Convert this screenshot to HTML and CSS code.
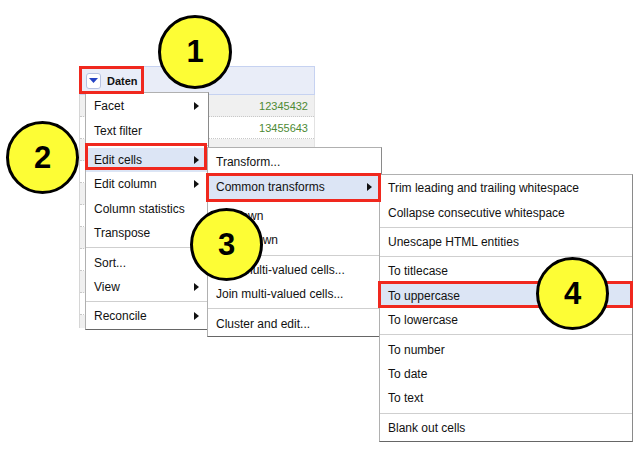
FILE: index.html
```html
<!DOCTYPE html>
<html lang="de">
<head>
<meta charset="utf-8">
<title>OpenRefine – Common transforms</title>
<link rel="stylesheet" href="styles.css">
</head>
<body>
<div class="stage">
  <div class="grid">
    <div class="head">
      <span class="dd"><svg width="9" height="5" viewBox="0 0 9 5"><path d="M0 0H9L4.5 5Z" fill="#2544c4"/></svg></span>
      <span class="colname">Daten</span>
    </div>
    <div class="rows">
      <div class="row odd"><span>12345432</span></div>
      <div class="row"><span>13455643</span></div>
      <div class="row odd"></div>
      <div class="row"></div>
      <div class="row odd"></div>
      <div class="row"></div>
      <div class="row odd"></div>
      <div class="row"></div>
      <div class="row odd"></div>
      <div class="row"></div>
      <div class="row odd"></div>
    </div>
  </div>

  <div class="menu m1">
    <div class="item"><span>Facet</span><svg class="arr" width="5" height="8" viewBox="0 0 5 8"><path d="M0 0L5 4L0 8Z"/></svg></div>
    <div class="item"><span>Text filter</span></div>
    <div class="sep"></div>
    <div class="item on"><span>Edit cells</span><svg class="arr" width="5" height="8" viewBox="0 0 5 8"><path d="M0 0L5 4L0 8Z"/></svg></div>
    <div class="item"><span>Edit column</span><svg class="arr" width="5" height="8" viewBox="0 0 5 8"><path d="M0 0L5 4L0 8Z"/></svg></div>
    <div class="item"><span>Column statistics</span></div>
    <div class="item"><span>Transpose</span></div>
    <div class="sep"></div>
    <div class="item"><span>Sort...</span></div>
    <div class="item"><span>View</span><svg class="arr" width="5" height="8" viewBox="0 0 5 8"><path d="M0 0L5 4L0 8Z"/></svg></div>
    <div class="sep"></div>
    <div class="item"><span>Reconcile</span><svg class="arr" width="5" height="8" viewBox="0 0 5 8"><path d="M0 0L5 4L0 8Z"/></svg></div>
  </div>

  <div class="menu m2">
    <div class="item"><span>Transform...</span></div>
    <div class="item on"><span>Common transforms</span><svg class="arr" width="5" height="8" viewBox="0 0 5 8"><path d="M0 0L5 4L0 8Z"/></svg></div>
    <div class="sep"></div>
    <div class="item"><span>Fill down</span></div>
    <div class="item"><span>Blank down</span></div>
    <div class="sep"></div>
    <div class="item"><span>Split multi-valued cells...</span></div>
    <div class="item"><span>Join multi-valued cells...</span></div>
    <div class="sep"></div>
    <div class="item"><span>Cluster and edit...</span></div>
  </div>

  <div class="menu m3">
    <div class="item"><span>Trim leading and trailing whitespace</span></div>
    <div class="item"><span>Collapse consecutive whitespace</span></div>
    <div class="sep"></div>
    <div class="item"><span>Unescape HTML entities</span></div>
    <div class="sep"></div>
    <div class="item"><span>To titlecase</span></div>
    <div class="item on"><span>To uppercase</span></div>
    <div class="item"><span>To lowercase</span></div>
    <div class="sep"></div>
    <div class="item"><span>To number</span></div>
    <div class="item"><span>To date</span></div>
    <div class="item"><span>To text</span></div>
    <div class="sep"></div>
    <div class="item"><span>Blank out cells</span></div>
  </div>

  <div class="mark mk-daten"></div>
  <div class="mark mk-edit"></div>
  <div class="mark mk-common"></div>
  <div class="mark mk-upper"></div>

  <div class="badge b1">1</div>
  <div class="badge b2">2</div>
  <div class="badge b3">3</div>
  <div class="badge b4">4</div>
</div>
</body>
</html>
```

FILE: styles.css
```css
html, body {
  margin: 0;
  padding: 0;
  background: #fff;
}

.stage {
  position: relative;
  width: 640px;
  height: 453px;
  overflow: hidden;
  background: #fff;
  padding-top: 66px;
  box-sizing: border-box;
  font-family: "Liberation Sans", Arial, Helvetica, sans-serif;
}

/* data table */
.grid {
  margin-left: 79px;
  width: 236px;
}

.head {
  height: 29px;
  box-sizing: border-box;
  border: 1px solid #c6d2f1;
  background: #e9edf8;
  display: flex;
  align-items: center;
  padding-left: 6px;
}

.dd {
  width: 15px;
  height: 16px;
  box-sizing: border-box;
  border: 1px solid #b7c3e2;
  border-radius: 3px;
  background: #fff;
  display: flex;
  align-items: center;
  justify-content: center;
}

.colname {
  margin-left: 6px;
  font-size: 11px;
  font-weight: bold;
  color: #111;
}

.rows {
  height: 233px;
  overflow: hidden;
  border-left: 1px solid #d6d6d6;
  border-right: 1px solid #e2e2e2;
}

.row {
  height: 22px;
  box-sizing: border-box;
  border-bottom: 1px dotted #c8c8c8;
  display: flex;
  align-items: center;
  justify-content: flex-end;
  padding-right: 6px;
  font-size: 11px;
  color: #4d8a34;
}

.row.odd {
  background: #f0f0f0;
}

/* popup menus */
.menu {
  position: absolute;
  box-sizing: border-box;
  background: #fff;
  border: 1px solid #b0b0b0;
  border-right-color: #8a8a8a;
  border-bottom-color: #666;
  font-size: 12px;
  color: #111;
}

.m1 {
  left: 85px;
  top: 92px;
  width: 124px;
  padding-top: 1px;
}

.m2 {
  left: 207px;
  top: 147px;
  width: 175px;
  padding-top: 2px;
}

.m3 {
  left: 379px;
  top: 174px;
  width: 254px;
  padding-top: 1px;
  padding-bottom: 1px;
}

.item {
  height: 24.4px;
  display: flex;
  align-items: center;
  justify-content: space-between;
  padding: 0 9px 0 8px;
  white-space: nowrap;
}

.item.on {
  background: #dce5f5;
}

.arr {
  fill: #111;
  flex: none;
}

.sep {
  height: 1px;
  margin: 2px 0;
  background: #cfcfcf;
}

/* annotation boxes */
.mark {
  position: absolute;
  box-sizing: border-box;
  border: 3px solid #f0281e;
}

.mk-daten { left: 79px; top: 66px; width: 65px; height: 28px; }
.mk-edit { left: 85px; top: 143px; width: 122px; height: 27px; }
.mk-common { left: 206px; top: 173px; width: 175px; height: 29px; }
.mk-upper { left: 378px; top: 281px; width: 255px; height: 27px; }

/* numbered callouts */
.badge {
  position: absolute;
  width: 73px;
  height: 73px;
  box-sizing: border-box;
  border-radius: 50%;
  border: 3px solid #000;
  background: #fdfd35;
  display: flex;
  align-items: center;
  justify-content: center;
  font-size: 31px;
  font-weight: bold;
  color: #000;
}

.b1 { left: 158px; top: 15px; width: 74px; height: 74px; }
.b2 { left: 6px; top: 121px; }
.b3 { left: 190px; top: 208px; }
.b4 { left: 536px; top: 257px; }
```
